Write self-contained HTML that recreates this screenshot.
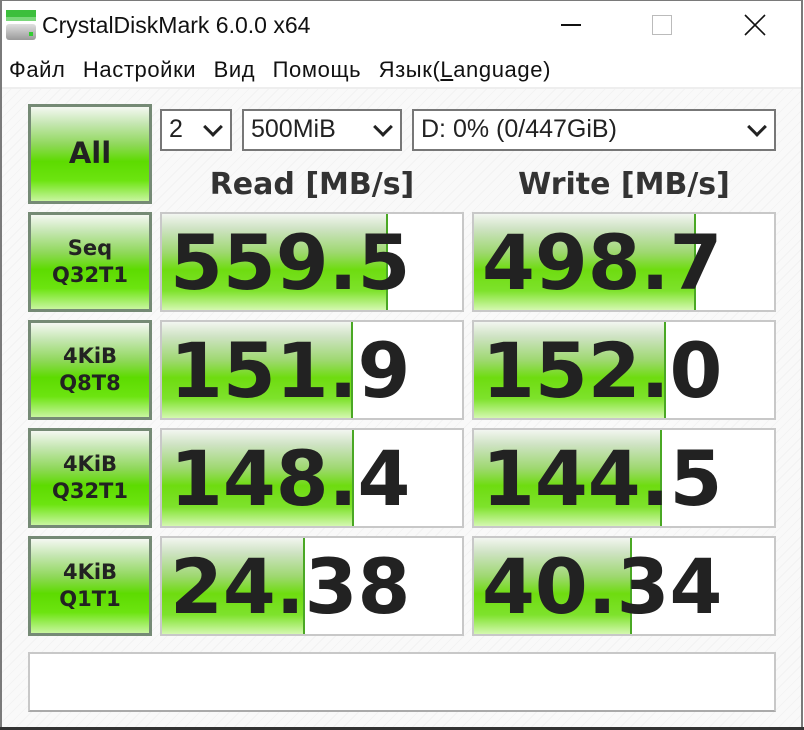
<!DOCTYPE html>
<html><head><meta charset="utf-8"><style>
*{margin:0;padding:0;box-sizing:border-box}
body{width:804px;height:730px;overflow:hidden;background:#fff;font-family:"Liberation Sans","DejaVu Sans",sans-serif;position:relative}
.abs{position:absolute}
.frame{left:0;top:0;width:803px;height:727px;border:2px solid #7a7a7a;border-bottom:none;border-top:1px solid #7a7a7a}
.client{left:2px;top:87px;width:799px;height:640px;background:repeating-linear-gradient(135deg,#f9f9f9 0 6px,#f3f3f3 6px 7px);border-top:2px solid #eee}
.btn{border:3px solid #758a75;background:linear-gradient(#f4f8f2 0%,#c4e6b0 18%,#8fd85a 40%,#5ddb00 58%,#6ce410 78%,#c8f5a0 100%);color:#222;font-family:"DejaVu Sans",sans-serif;font-weight:bold;text-align:center;display:flex;align-items:center;justify-content:center;line-height:1.3}
.cell{border:2px solid #c8c8c8;background:#fff;overflow:hidden}
.bar{position:absolute;left:0;top:0;bottom:0;background:linear-gradient(#f2f6f0 0%,#cfe3c4 15%,#9ed870 40%,#6edc10 58%,#7ee22c 80%,#d4f8b0 100%);border-right:2px solid #4aa824}
.num{position:absolute;left:8px;top:4px;font-family:"DejaVu Sans",sans-serif;font-weight:bold;font-size:76px;color:#222;line-height:90px}
.sel{border:2px solid #777;background:#fff;font-size:25px;color:#222;padding-left:7px;line-height:36px}
.chev{position:absolute;right:10px;top:9px;width:14px;height:14px;border-right:3px solid #222;border-bottom:3px solid #222;transform:rotate(45deg)}
.hdr{font-family:"DejaVu Sans",sans-serif;font-weight:bold;font-size:30px;color:#333;text-align:center}
</style></head><body>
<div class="abs frame"></div>
<div class="abs" style="left:6px;top:10px;width:30px;height:30px">
<div class="abs" style="left:0;top:0;width:30px;height:7px;background:#3cbf3c"></div>
<div class="abs" style="left:0;top:7px;width:30px;height:4px;background:#7ad87a"></div>
<div class="abs" style="left:0;top:14px;width:30px;height:16px;background:linear-gradient(#e0e0e0,#9a9a9a);border-radius:3px"></div>
<div class="abs" style="left:23px;top:22px;width:4px;height:4px;background:#3c3"></div>
</div>
<div class="abs" style="left:42px;top:12px;font-size:23px;color:#111">CrystalDiskMark 6.0.0 x64</div>
<div class="abs" style="left:561px;top:24px;width:20px;height:2px;background:#111"></div>
<div class="abs" style="left:652px;top:15px;width:20px;height:20px;border:1px solid #bbb"></div>
<svg class="abs" style="left:744px;top:14px" width="22" height="22"><path d="M1 1L21 21M21 1L1 21" stroke="#111" stroke-width="1.6"/></svg>
<div class="abs" style="left:9px;top:57px;font-size:22px;color:#111;letter-spacing:0.6px;word-spacing:2px;white-space:nowrap">Файл&nbsp; Настройки&nbsp; Вид&nbsp; Помощь&nbsp; Язык(<u>L</u>anguage)</div>
<div class="abs client"></div>

<div class="abs btn" style="left:28px;top:104px;width:124px;height:100px;font-size:29px">All</div>
<div class="abs sel" style="left:160px;top:109px;width:72px;height:42px">2<div class="chev"></div></div>
<div class="abs sel" style="left:242px;top:109px;width:160px;height:42px">500MiB<div class="chev"></div></div>
<div class="abs sel" style="left:412px;top:109px;width:364px;height:42px">D: 0% (0/447GiB)<div class="chev"></div></div>
<div class="abs hdr" style="left:160px;top:167px;width:304px">Read [MB/s]</div>
<div class="abs hdr" style="left:472px;top:167px;width:304px">Write [MB/s]</div>

<div class="abs btn" style="left:28px;top:212px;width:124px;height:100px;font-size:21px">Seq<br>Q32T1</div>
<div class="abs cell" style="left:160px;top:212px;width:304px;height:100px"><div class="bar" style="width:226px"></div><div class="num">559.5</div></div>
<div class="abs cell" style="left:472px;top:212px;width:304px;height:100px"><div class="bar" style="width:222px"></div><div class="num">498.7</div></div>

<div class="abs btn" style="left:28px;top:320px;width:124px;height:100px;font-size:21px">4KiB<br>Q8T8</div>
<div class="abs cell" style="left:160px;top:320px;width:304px;height:100px"><div class="bar" style="width:191px"></div><div class="num">151.9</div></div>
<div class="abs cell" style="left:472px;top:320px;width:304px;height:100px"><div class="bar" style="width:192px"></div><div class="num">152.0</div></div>

<div class="abs btn" style="left:28px;top:428px;width:124px;height:100px;font-size:21px">4KiB<br>Q32T1</div>
<div class="abs cell" style="left:160px;top:428px;width:304px;height:100px"><div class="bar" style="width:192px"></div><div class="num">148.4</div></div>
<div class="abs cell" style="left:472px;top:428px;width:304px;height:100px"><div class="bar" style="width:188px"></div><div class="num">144.5</div></div>

<div class="abs btn" style="left:28px;top:536px;width:124px;height:100px;font-size:21px">4KiB<br>Q1T1</div>
<div class="abs cell" style="left:160px;top:536px;width:304px;height:100px"><div class="bar" style="width:143px"></div><div class="num">24.38</div></div>
<div class="abs cell" style="left:472px;top:536px;width:304px;height:100px"><div class="bar" style="width:158px"></div><div class="num">40.34</div></div>

<div class="abs" style="left:28px;top:652px;width:748px;height:60px;border:2px solid #c8c8c8;border-bottom-color:#aaa;background:#fff"></div>
<div class="abs" style="left:0;top:727px;width:804px;height:3px;background:#333"></div>
</body></html>
